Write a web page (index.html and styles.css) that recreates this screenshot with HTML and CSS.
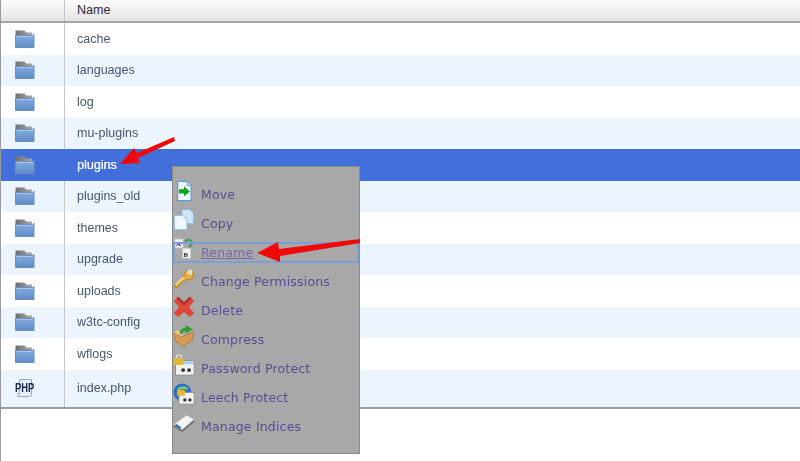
FILE: index.html
```html
<!DOCTYPE html>
<html lang="en">
<head>
<meta charset="utf-8">
<title>File Manager</title>
<link rel="stylesheet" href="styles.css">
</head>
<body>
<svg class="defs" width="0" height="0" aria-hidden="true">
  <defs>
    <linearGradient id="fg" x1="0" y1="0" x2="0" y2="1"><stop offset="0" stop-color="#86aee2"/><stop offset="1" stop-color="#5f8bc6"/></linearGradient>
    <linearGradient id="ft" x1="0" y1="0" x2="1" y2="0"><stop offset="0" stop-color="#707070"/><stop offset="1" stop-color="#a8a8a8"/></linearGradient>
    <symbol id="folder" viewBox="0 0 22 20">
      <path d="M1.500 1.500h9l1.500 2h6v4h-16.500z" fill="url(#ft)"/>
      <path d="M1.500 6.500h17l1.500-1.200v13.200h-18.500z" fill="url(#fg)" stroke="#6b8fbe" stroke-width="1"/>
      <path d="M2.500 7.500h16.500" stroke="#a9c6ea" stroke-width="1"/>
    </symbol>
  </defs>
</svg>
<main class="fm">
  <div class="row head"><div class="ic"></div><div class="nm">Name</div></div>
  <div class="row"><div class="ic"><svg class="fo"><use href="#folder"/></svg></div><div class="nm">cache</div></div>
  <div class="row alt"><div class="ic"><svg class="fo"><use href="#folder"/></svg></div><div class="nm">languages</div></div>
  <div class="row"><div class="ic"><svg class="fo"><use href="#folder"/></svg></div><div class="nm">log</div></div>
  <div class="row alt"><div class="ic"><svg class="fo"><use href="#folder"/></svg></div><div class="nm">mu-plugins</div></div>
  <div class="row sel"><div class="ic"><svg class="fo"><use href="#folder"/></svg></div><div class="nm">plugins</div></div>
  <div class="row alt"><div class="ic"><svg class="fo"><use href="#folder"/></svg></div><div class="nm">plugins_old</div></div>
  <div class="row"><div class="ic"><svg class="fo"><use href="#folder"/></svg></div><div class="nm">themes</div></div>
  <div class="row alt"><div class="ic"><svg class="fo"><use href="#folder"/></svg></div><div class="nm">upgrade</div></div>
  <div class="row"><div class="ic"><svg class="fo"><use href="#folder"/></svg></div><div class="nm">uploads</div></div>
  <div class="row alt"><div class="ic"><svg class="fo"><use href="#folder"/></svg></div><div class="nm">w3tc-config</div></div>
  <div class="row"><div class="ic"><svg class="fo"><use href="#folder"/></svg></div><div class="nm">wflogs</div></div>
  <div class="row alt last"><div class="ic">
    <span class="php"><svg class="php-bg" viewBox="0 0 20 20"><path d="M4.500 1.500h12v14.500q0 2.500-2 2.500h-11.500v-3h1.500z" fill="#e8f1fb" stroke="#86abd8"/></svg><span class="php-t">PHP</span></span>
  </div><div class="nm">index.php</div></div>
</main>

<nav class="menu">
  <div class="mi"><svg class="mic" viewBox="0 0 26 26"><path d="M5.500 1.500h11l5 5v18h-16z" fill="#eef6fd" stroke="#5c9fd6" stroke-width="1.500"/><path d="M16.500 1.500v5h5" fill="#bcdcf3" stroke="#5c9fd6"/><path d="M7 11h6v-3.500l7 6-7 6v-3.500h-6z" fill="#12a51f"/></svg><a>Move</a></div>
  <div class="mi"><svg class="mic" viewBox="0 0 26 26"><path d="M10.500 0.500h9l5 5v12h-14z" fill="#cfe5f6" stroke="#7db2de"/><path d="M1.500 7.500h10l5 5v12h-15z" fill="#f0f8fe" stroke="#7db2de"/></svg><a>Copy</a></div>
  <div class="mi cur"><svg class="mic" viewBox="0 0 26 26"><path d="M14 4q4-3 7-1t-1 7l-1 2" fill="none" stroke="#2f9e57" stroke-width="2.200"/><rect x="2" y="1" width="10" height="11" fill="#e9e9ee" stroke="#bbb"/><rect x="11" y="12" width="10" height="12" fill="#f2f2f2" stroke="#bbb"/><text x="3.500" y="10" class="ab">A</text><text x="12.500" y="22" class="ab">B</text></svg><a>Rename</a></div>
  <div class="mi"><svg class="mic" viewBox="0 0 26 26"><path d="M2 21l1 3 3 0 1-3 3-1 1-3 3-1 2-1q5 1 7-2 3-4 0-8-4-3-8 0-3 3-2 7z" fill="#e6ac3c" stroke="#a87a20"/><circle cx="20" cy="6" r="2.500" fill="#ccc" stroke="#fff"/><path d="M3 21l10-9" stroke="#f7dc8e" stroke-width="2"/></svg><a>Change Permissions</a></div>
  <div class="mi"><svg class="mic" viewBox="0 0 26 26"><path d="M6 1l7 6 7-6 5 5-6 7 6 7-5 5-7-6-7 6-5-5 6-7-6-7z" fill="#e0473c"/><path d="M6 1l7 6 7-6 2 2-9 8-9-8z" fill="#a92f28"/></svg><a>Delete</a></div>
  <div class="mi"><svg class="mic" viewBox="0 0 26 26"><path d="M1 9l10 5 13-6-1 10-11 7-9-6z" fill="#d69b51" stroke="#a8743a"/><path d="M1 9l4-3 6 4v4z" fill="#efc487"/><path d="M8 10q0-6 7-7v-3l8 5-8 5v-3q-3 0-5 4z" fill="#2f9e2f"/></svg><a>Compress</a></div>
  <div class="mi"><svg class="mic" viewBox="0 0 26 26"><rect x="3" y="8" width="22" height="17" fill="#eef0f2" stroke="#888"/><rect x="4" y="9" width="20" height="3" fill="#a9cbea"/><circle cx="12" cy="19" r="2.300" fill="#333"/><circle cx="19" cy="19" r="2.300" fill="#333"/><path d="M4 5v-2q0-2 3-2t3 2v2" fill="none" stroke="#ddd" stroke-width="1.500"/><rect x="1" y="5" width="11" height="8" fill="#e8b734"/></svg><a>Password Protect</a></div>
  <div class="mi"><svg class="mic" viewBox="0 0 26 26"><circle cx="11" cy="11" r="10.500" fill="#2a72c8"/><path d="M5 7q6-6 13-1l-2 2q-5-3-10 1z" fill="#7ed06a"/><rect x="7" y="11" width="18" height="14" fill="#eef0f2" stroke="#888"/><circle cx="14" cy="20" r="2" fill="#333"/><circle cx="20" cy="20" r="2" fill="#333"/><rect x="5" y="8" width="9" height="7" fill="#e8b734"/></svg><a>Leech Protect</a></div>
  <div class="mi"><svg class="mic" viewBox="0 0 26 26"><path d="M1 15l15-11 9 5-14 12z" fill="#f6f6f6" stroke="#ccc"/><path d="M3 15l6 4" stroke="#2a6fd0" stroke-width="2.500"/><path d="M11 21l14-12v3l-14 12-10-6v-3z" fill="#777"/></svg><a>Manage Indices</a></div>
</nav>

<svg class="arrows" viewBox="0 0 800 461" aria-hidden="true">
  <path d="M174 137L137 153l-3-5-14 16 20-1-2-5 37-17z" fill="#f00808"/>
  <path d="M360 239L279 249l-1-7-21 11 23 9 0-6 80-13z" fill="#f00808"/>
</svg>
</body>
</html>
```
FILE: styles.css
```css
* { box-sizing: border-box; }
html, body { margin: 0; padding: 0; }
body {
  width: 800px;
  height: 461px;
  overflow: hidden;
  background: #fff;
  font-family: "Liberation Sans", Arial, sans-serif;
  position: relative;
  border-left: 1px solid #9a9a9a;
  filter: blur(.3px);
}
.defs { position: absolute; }
.fm {
  display: flex;
  flex-direction: column;
}
.row {
  display: grid;
  grid-template-columns: 64px 1fr;
  height: 31.5px;
  font-size: 12.500px;
  color: #46566e;
}
.ic, .nm { display: flex; align-items: center; }
.ic { justify-content: center; border-right: 1px solid #c6c6c6; padding-right: 16px; }
.nm { padding-left: 12px; }
.alt { background: #ecf4fe; }
.head {
  height: 23px;
  background: linear-gradient(#fbfbfb, #e4e4e4);
  border-bottom: 2px solid #a6a6a6;
  color: #2c2c3c;
}
.head .nm { padding-bottom: 2px; }
.sel { background: #426fd9; color: #f2f6ff; text-shadow: .3px 0 0 #f2f6ff; }
.sel .ic { border-right-color: #426fd9; }
.last { height: 39px; border-bottom: 2px solid #9c9c9c; }
.fo { width: 22px; height: 20px; display: block; }
.php { position: relative; display: block; width: 20px; height: 20px; }
.php-bg { width: 20px; height: 20px; display: block; }
.php-t {
  position: absolute;
  left: 0;
  top: 3px;
  font-size: 13px;
  line-height: 13px;
  font-family: "Liberation Sans", sans-serif;
  font-weight: bold;
  color: #16264e;
  transform: scaleX(.72);
  transform-origin: left;
}
.menu {
  position: absolute;
  left: 171px;
  top: 166px;
  width: 188px;
  height: 288px;
  background: #a8a8a8;
  border: 1px solid #8a8a8a;
  padding-top: 13px;
  display: flex;
  flex-direction: column;
  font-family: "DejaVu Sans", Verdana, sans-serif;
  font-size: 12.500px;
  letter-spacing: .18px;
  color: #594d96;
}
.mi {
  height: 29px;
  display: flex;
  align-items: center;
  gap: 6px;
  flex: none;
}
.mic { width: 22px; height: 22px; flex: none; margin-top: -7px; overflow: visible; }
.cur { position: relative; color: #7468b0; }
.cur::after {
  content: "";
  position: absolute;
  left: 0;
  right: 0;
  top: 4px;
  bottom: 4px;
  border: 2px solid #7e9ed6;
  border-radius: 1px;
}
.cur a { text-decoration: underline; }
.ab { font: bold 8px "Liberation Serif", serif; letter-spacing: 0; fill: #222; }
.arrows { position: absolute; left: -1px; top: 0; width: 800px; height: 461px; pointer-events: none; }
```
